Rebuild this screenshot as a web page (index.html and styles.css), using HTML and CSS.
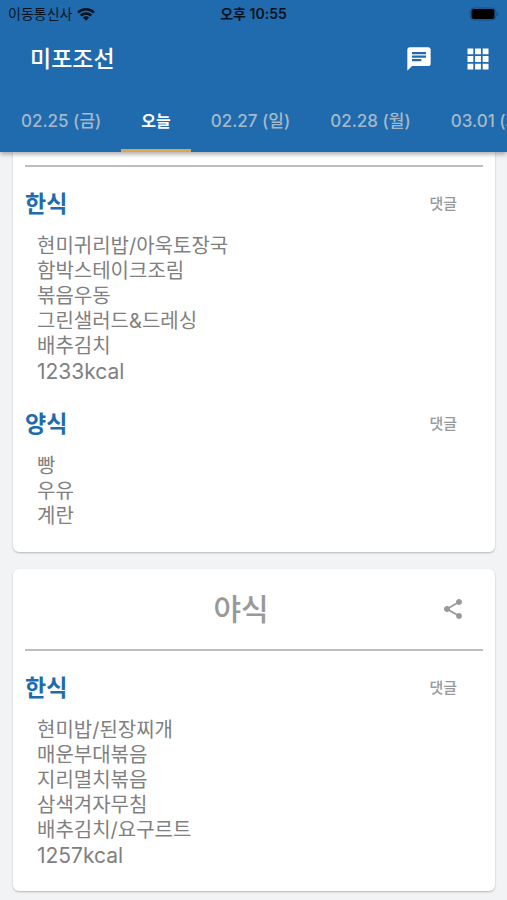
FILE: index.html
```html
<!DOCTYPE html>
<html lang="ko">
<head>
<meta charset="utf-8">
<meta name="viewport" content="width=device-width, initial-scale=1">
<title>미포조선</title>
<link rel="stylesheet" href="styles.css">
</head>
<body>
<header class="top">
  <div class="status">
    <div class="carrier">
      <span>이동통신사</span>
      <svg class="wifi" viewBox="0 0 18 13" aria-hidden="true">
        <path d="M1 4.6a11.5 11.5 0 0 1 16 0M3.8 7.5a7.5 7.5 0 0 1 10.4 0" fill="none" stroke="currentColor" stroke-width="2.5"/>
        <path d="M5.9 9.6a4.4 4.4 0 0 1 6.2 0L9 12.8z" fill="currentColor"/>
      </svg>
    </div>
    <span class="clock">오후 10:55</span>
    <svg class="battery" viewBox="0 0 30 14" aria-hidden="true">
      <rect x="1" y="1" width="26" height="12" rx="4" fill="none" stroke="#184f80" stroke-width="1"/>
      <rect x="2.500" y="2" width="23" height="10" rx="2.500"/>
      <path d="M28 5v4c1.800-.7 1.800-3.300 0-4z" fill="#184f80"/>
    </svg>
  </div>
  <div class="appbar">
    <h1>미포조선</h1>
    <button type="button" aria-label="댓글">
      <svg viewBox="0 0 24 24"><path d="M20 2H4c-1.100 0-1.990.9-1.990 2L2 22l4-4h14c1.100 0 2-.9 2-2V4c0-1.100-.9-2-2-2zM6 9h12v2H6V9zm8 5H6v-2h8v2zm4-6H6V6h12v2z"/></svg>
    </button>
    <button type="button" aria-label="메뉴">
      <svg viewBox="0 0 24 24"><path d="M3 8h5V3H3v5zm6.500 13h5v-5h-5v5zM3 21h5v-5H3v5zm0-6.500h5v-5H3v5zm6.500 0h5v-5h-5v5zM16 3v5h5V3h-5zM9.500 8h5V3h-5v5zm6.500 6.500h5v-5h-5v5zm0 6.500h5v-5h-5v5z"/></svg>
    </button>
  </div>
  <nav class="tabs">
    <a href="#d0225">02.25 (금)</a>
    <a href="#today" class="active" aria-current="date">오늘</a>
    <a href="#d0227">02.27 (일)</a>
    <a href="#d0228">02.28 (월)</a>
    <a href="#d0301">03.01 (화)</a>
  </nav>
</header>
<main id="today">
  <article class="card continued">
    <section class="meal">
      <div class="meal-head"><h3>한식</h3><button type="button">댓글</button></div>
      <ul>
        <li>현미귀리밥/아욱토장국</li>
        <li>함박스테이크조림</li>
        <li>볶음우동</li>
        <li>그린샐러드&amp;드레싱</li>
        <li>배추김치</li>
        <li class="kcal">1233kcal</li>
      </ul>
    </section>
    <section class="meal">
      <div class="meal-head"><h3>양식</h3><button type="button">댓글</button></div>
      <ul>
        <li>빵</li>
        <li>우유</li>
        <li>계란</li>
      </ul>
    </section>
  </article>
  <article class="card">
    <div class="card-head">
      <h2>야식</h2>
      <button type="button" aria-label="공유">
        <svg viewBox="0 0 24 24"><path d="M18 16.080c-.760 0-1.440.3-1.960.770L8.910 12.700c.050-.230.090-.460.090-.7s-.040-.470-.090-.7l7.050-4.110c.540.5 1.250.810 2.040.810 1.660 0 3-1.340 3-3s-1.340-3-3-3-3 1.340-3 3c0 .240.040.470.090.7L8.040 9.810C7.500 9.310 6.790 9 6 9c-1.660 0-3 1.340-3 3s1.340 3 3 3c.790 0 1.500-.310 2.040-.810l7.120 4.160c-.050.210-.080.430-.080.650 0 1.610 1.310 2.920 2.920 2.920s2.920-1.310 2.920-2.920-1.310-2.920-2.920-2.920z"/></svg>
      </button>
    </div>
    <section class="meal">
      <div class="meal-head"><h3>한식</h3><button type="button">댓글</button></div>
      <ul>
        <li>현미밥/된장찌개</li>
        <li>매운부대볶음</li>
        <li>지리멸치볶음</li>
        <li>삼색겨자무침</li>
        <li>배추김치/요구르트</li>
        <li class="kcal">1257kcal</li>
      </ul>
    </section>
  </article>
</main>
</body>
</html>
```
FILE: styles.css
```css
* {
  box-sizing: border-box;
}

body {
  margin: 0;
  background: #f1f3f5;
  color: #808080;
  font-family: Inter, "Noto Sans CJK KR", sans-serif;
}

h1, h2, h3, ul {
  margin: 0;
  padding: 0;
}

button {
  padding: 0;
  border: 0;
  background: none;
  color: inherit;
  font: inherit;
  cursor: pointer;
}

button svg {
  display: block;
  width: 100%;
  fill: currentColor;
}

.top {
  position: sticky;
  top: 0;
  z-index: 1;
  background: #206bad;
  color: #fff;
  box-shadow: 0 2px 5px rgba(0, 0, 0, 0.35);
}

.status {
  display: grid;
  grid-template-columns: 1fr auto 1fr;
  align-items: center;
  height: 28px;
  padding: 0 8px 0 8px;
  color: #05121e;
  font-size: 14px;
  line-height: 20px;
}

.carrier {
  display: flex;
  align-items: center;
  gap: 5px;
}

.wifi {
  width: 18px;
  height: 13px;
}

.clock {
  font-weight: 600;
}

.battery {
  justify-self: end;
  width: 30px;
  height: 14px;
}

.appbar {
  display: flex;
  align-items: center;
  gap: 31px;
  height: 62px;
  padding: 0 15px 0 30px;
}

.appbar h1 {
  flex: 1;
  font-size: 23px;
  font-weight: 500;
  line-height: 32px;
}

.appbar button {
  width: 28px;
}

.tabs {
  display: flex;
  height: 62px;
  padding-left: 1px;
  overflow: hidden;
}

.tabs a {
  flex: none;
  padding: 0 20px;
  border-bottom: 3px solid transparent;
  color: #a5b9cb;
  font-size: 17px;
  font-weight: 500;
  line-height: 62px;
  text-decoration: none;
}

.tabs .active {
  border-color: #e0a64c;
  color: #fff;
  font-size: 16px;
  font-weight: 700;
}

main {
  display: grid;
  gap: 17px;
  padding: 0 12px 8px 13px;
}

.card {
  padding: 0 12px 23px;
  border-radius: 6px;
  background: #fff;
  box-shadow: 0 1px 2px rgba(0, 0, 0, 0.25);
}

.continued {
  padding-top: 13px;
  border-radius: 0 0 6px 6px;
}

.card-head {
  display: flex;
  align-items: center;
  height: 80px;
  padding: 0 18px 0 16px;
}

.card-head h2 {
  flex: 1;
  color: #999;
  font-size: 30px;
  font-weight: 500;
  line-height: 40px;
  text-align: center;
}

.card-head button {
  width: 24px;
  color: #999;
}

.meal:not(.meal + .meal) {
  border-top: 2px solid #bdbdbd;
}

.meal + .meal {
  padding-top: 3px;
}

.meal-head {
  display: flex;
  align-items: center;
  justify-content: space-between;
  height: 67px;
  padding: 6px 26px 0 0;
}

.meal-head h3 {
  color: #206bad;
  font-size: 23px;
  font-weight: 700;
  line-height: 32px;
}

.meal-head button {
  color: #999;
  font-size: 15px;
  font-weight: 500;
  line-height: 20px;
}

ul {
  padding-left: 12px;
  list-style: none;
}

li {
  font-size: 20px;
  line-height: 25px;
}

.kcal {
  font-size: 21px;
}
```
